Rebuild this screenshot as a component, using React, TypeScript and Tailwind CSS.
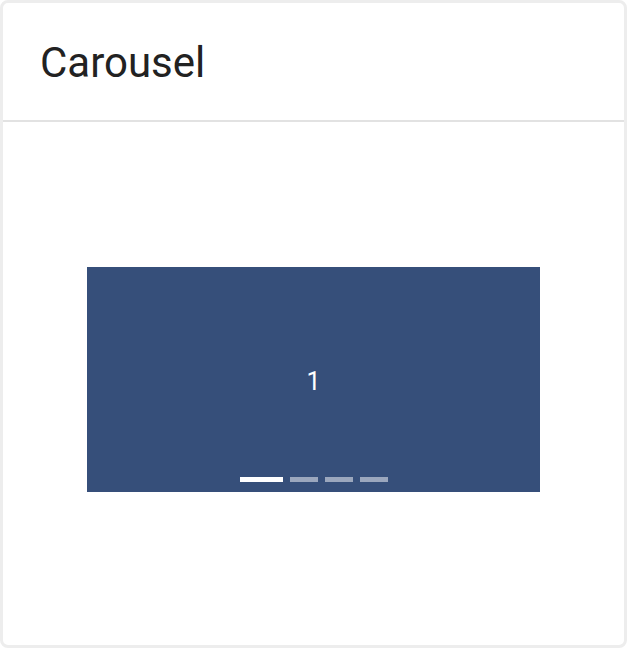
import { useState } from "react";

const slides = ["1", "2", "3", "4"];

export default function App() {
  const [active, setActive] = useState(0);

  return (
    <div className="h-[649px] w-[627px] bg-white font-['Roboto',sans-serif]">
      <div className="flex h-[648px] flex-col rounded-lg border-[3px] border-[#ededed] bg-white">
        <div className="flex h-[119px] items-center border-b-2 border-[#e2e2e2] pl-[37px]">
          <h1 className="pt-[2px] text-[42px] leading-none text-[#222]">Carousel</h1>
        </div>
        <div className="flex flex-1 items-center justify-center pb-[8px]">
          <div className="relative flex h-[225px] w-[453px] items-center justify-center bg-[#364f7a] pt-[4px]">
            <span className="text-[25px] text-white">{slides[active]}</span>
            <div className="absolute bottom-[10px] left-0 right-0 flex justify-center gap-[7px] pl-[1px]">
              {slides.map((s, i) => (
                <button
                  key={s}
                  onClick={() => setActive(i)}
                  className={
                    i === active
                      ? "h-[5px] w-[43px] bg-white"
                      : "h-[5px] w-[28px] bg-white/50"
                  }
                />
              ))}
            </div>
          </div>
        </div>
      </div>
    </div>
  );
}
